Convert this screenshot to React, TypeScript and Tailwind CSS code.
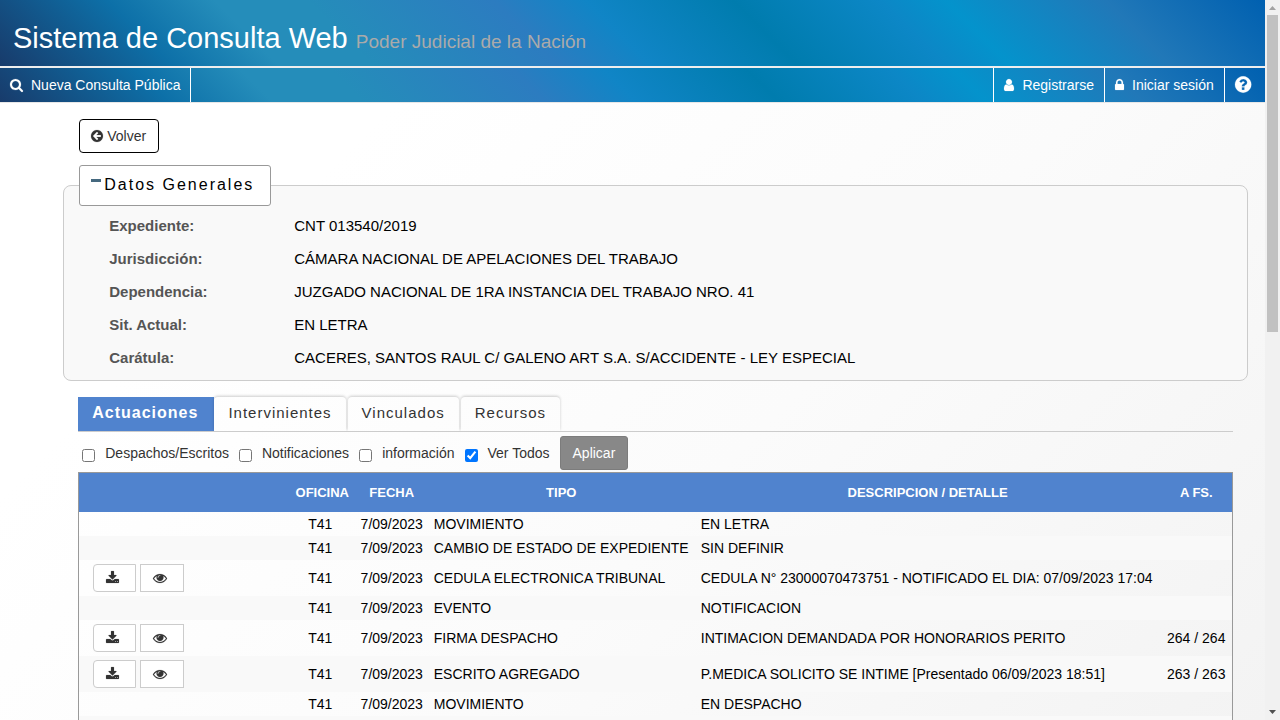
import React from "react";

type IconName =
  | "search"
  | "user"
  | "lock"
  | "question"
  | "back"
  | "download"
  | "eye";

const ICONS: Record<IconName, { left: number; width: number; d: string }> = {
  search: {
    left: 64,
    width: 1664,
    d: "M1216 832q0-185-131.5-316.5t-316.5-131.5-316.5 131.5-131.5 316.5 131.5 316.5 316.5 131.5 316.5-131.5 131.5-316.5zm512 832q0 52-38 90t-90 38q-54 0-90-38l-343-342q-179 124-399 124-143 0-273.5-55.5t-225-150-150-225-55.5-273.5 55.5-273.5 150-225 225-150 273.5-55.5 273.5 55.5 225 150 150 225 55.5 273.5q0 220-124 399l343 343q37 37 37 90z",
  },
  user: {
    left: 256,
    width: 1280,
    d: "M1536 1399q0 109-62.5 187t-150.5 78h-854q-88 0-150.5-78t-62.5-187q0-85 8.5-160.5t31.5-152 58.5-131 94-89 134.5-34.5q131 128 313 128t313-128q76 0 134.5 34.5t94 89 58.5 131 31.5 152 8.5 160.5zm-256-887q0 159-112.5 271.5t-271.5 112.5-271.5-112.5-112.5-271.5 112.5-271.5 271.5-112.5 271.5 112.5 112.5 271.5z",
  },
  lock: {
    left: 320,
    width: 1152,
    d: "M640 768h512v-192q0-106-75-181t-181-75-181 75-75 181v192zm832 96v576q0 40-28 68t-68 28h-960q-40 0-68-28t-28-68v-576q0-40 28-68t68-28h32v-192q0-184 132-316t316-132 316 132 132 316v192h32q40 0 68 28t28 68z",
  },
  question: {
    left: 128,
    width: 1536,
    d: "M1024 1376v-192q0-14-9-23t-23-9h-192q-14 0-23 9t-9 23v192q0 14 9 23t23 9h192q14 0 23-9t9-23zm256-672q0-88-55.5-163t-138.5-116-170-41q-243 0-371 213-15 24 8 42l132 100q7 6 19 6 16 0 25-12 53-68 86-92 34-24 86-24 48 0 85.5 26t37.5 59q0 38-20 61t-68 45q-63 28-115.5 86.5t-52.5 125.5v36q0 14 9 23t23 9h192q14 0 23-9t9-23q0-19 21.5-49.5t54.5-49.5q32-18 49-28.5t46-35 44.5-48 28-60.5 12.5-81zm384 192q0 209-103 385.5t-279.5 279.5-385.5 103-385.5-103-279.5-279.5-103-385.5 103-385.5 279.5-279.5 385.5-103 385.5 103 279.5 279.5 103 385.5z",
  },
  back: {
    left: 128,
    width: 1536,
    d: "M1408 960v-128q0-26-19-45t-45-19h-502l189-189q19-19 19-45t-19-45l-91-91q-18-18-45-18t-45 18l-362 362-91 91q-18 18-18 45t18 45l91 91 362 362q18 18 45 18t45-18l91-91q18-18 18-45t-18-45l-189-189h502q26 0 45-19t19-45zm256-64q0 209-103 385.5t-279.5 279.5-385.5 103-385.5-103-279.5-279.5-103-385.5 103-385.5 279.5-279.5 385.5-103 385.5 103 279.5 279.5 103 385.5z",
  },
  download: {
    left: 64,
    width: 1664,
    d: "M1344 1344q0-26-19-45t-45-19-45 19-19 45 19 45 45 19 45-19 19-45zm256 0q0-26-19-45t-45-19-45 19-19 45 19 45 45 19 45-19 19-45zm128-224v320q0 40-28 68t-68 28h-1472q-40 0-68-28t-28-68v-320q0-40 28-68t68-28h465l135 136q58 56 136 56t136-56l136-136h464q40 0 68 28t28 68zm-325-569q17 41-14 70l-448 448q-18 19-45 19t-45-19l-448-448q-31-29-14-70 17-39 59-39h256v-448q0-26 19-45t45-19h256q26 0 45 19t19 45v448h256q42 0 59 39z",
  },
  eye: {
    left: 0,
    width: 1792,
    d: "M1664 960q-152-236-381-353 61 104 61 225 0 185-131.5 316.5t-316.5 131.5-316.5-131.5-131.5-316.5q0-121 61-225-229 117-381 353 133 205 333.5 326.5t434.5 121.5 434.5-121.5 333.5-326.5zm-720-384q0-20-14-34t-34-14q-125 0-214.5 89.5t-89.5 214.5q0 20 14 34t34 14 34-14 14-34q0-86 61-147t147-61q20 0 34-14t14-34zm848 384q0 34-20 69-140 230-376.5 368.5t-499.5 138.5-499.5-139-376.5-368q-20-35-20-69t20-69q140-229 376.5-368t499.5-139 499.5 139 376.5 368q20 35 20 69z",
  },
};

function Icon({ name, className = "h-3.5" }: { name: IconName; className?: string }) {
  const icon = ICONS[name];
  return (
    <svg
      viewBox={`${icon.left} 0 ${icon.width} 1792`}
      className={`${className} w-auto shrink-0 overflow-visible fill-current stroke-current`}
      strokeWidth="20"
      aria-hidden="true"
    >
      <path d={icon.d} />
    </svg>
  );
}

const BAND =
  "bg-[linear-gradient(45deg,#183b6b_0%,#0d70a8_13%,#258dba_21%,#258dba_28%,#2c7cc0_42%,#1085c6_49%,#007cae_60%,#0c87c6_71%,#0493cc_76%,#2178b8_88%,#0060b0_100%)]";

const DATOS = [
  ["Expediente:", "CNT 013540/2019"],
  ["Jurisdicción:", "CÁMARA NACIONAL DE APELACIONES DEL TRABAJO"],
  ["Dependencia:", "JUZGADO NACIONAL DE 1RA INSTANCIA DEL TRABAJO NRO. 41"],
  ["Sit. Actual:", "EN LETRA"],
  ["Carátula:", "CACERES, SANTOS RAUL C/ GALENO ART S.A. S/ACCIDENTE - LEY ESPECIAL"],
];

interface Actuacion {
  tipo: string;
  detalle: string;
  fojas?: string;
  archivo?: boolean;
}

const ACTUACIONES: Actuacion[] = [
  { tipo: "MOVIMIENTO", detalle: "EN LETRA" },
  { tipo: "CAMBIO DE ESTADO DE EXPEDIENTE", detalle: "SIN DEFINIR" },
  {
    tipo: "CEDULA ELECTRONICA TRIBUNAL",
    detalle: "CEDULA N° 23000070473751 - NOTIFICADO EL DIA: 07/09/2023 17:04",
    archivo: true,
  },
  { tipo: "EVENTO", detalle: "NOTIFICACION" },
  {
    tipo: "FIRMA DESPACHO",
    detalle: "INTIMACION DEMANDADA POR HONORARIOS PERITO",
    fojas: "264 / 264",
    archivo: true,
  },
  {
    tipo: "ESCRITO AGREGADO",
    detalle: "P.MEDICA SOLICITO SE INTIME [Presentado 06/09/2023 18:51]",
    fojas: "263 / 263",
    archivo: true,
  },
  { tipo: "MOVIMIENTO", detalle: "EN DESPACHO" },
];

function NavBar() {
  return (
    <nav className={`flex h-[35px] border-b border-[#e7e7e7] text-sm text-white ${BAND}`}>
      <a href="#consulta" className="flex items-center gap-2 border-r border-white px-2.5">
        <Icon name="search" />
        Nueva Consulta Pública
      </a>
      <div className="ml-auto flex">
        <a href="#registro" className="flex items-center gap-2 border-l border-white px-2.5">
          <Icon name="user" />
          Registrarse
        </a>
        <a href="#sesion" className="flex items-center gap-2 border-l border-white px-2.5">
          <Icon name="lock" />
          Iniciar sesión
        </a>
        <a
          href="#ayuda"
          aria-label="Ayuda"
          className="flex items-center border-l border-white pr-3.5 pb-0.5 pl-2.5"
        >
          <Icon name="question" className="h-[19px]" />
        </a>
      </div>
    </nav>
  );
}

function DatosGenerales() {
  return (
    <fieldset className="mt-3 rounded-lg border border-[#ccc] bg-[#f9f9f9] pt-[3px] pb-1.5">
      <legend className="ml-[15px] flex h-[41px] w-48 items-center gap-[3px] rounded-[3px] border border-[#999] bg-white pb-0.5 pl-[11px] text-base tracking-[2px]">
        <span className="mb-2 h-[3px] w-2.5 bg-[#45697f]" />
        Datos Generales
      </legend>
      <dl className="grid grid-cols-[185px_1fr] pl-[45px] text-[15px] leading-[33px]">
        {DATOS.map(([campo, valor]) => (
          <React.Fragment key={campo}>
            <dt className="font-bold text-[#555]">{campo}</dt>
            <dd>{valor}</dd>
          </React.Fragment>
        ))}
      </dl>
    </fieldset>
  );
}

function Tabs() {
  return (
    <div role="tablist" className="mt-4 flex h-[35px] gap-0.5 border-b border-[#ccc]">
      <button
        role="tab"
        aria-selected="true"
        className="-mr-0.5 bg-[#5083ce] pr-4 pb-0.5 pl-3.5 text-base font-bold tracking-[1px] text-white"
      >
        Actuaciones
      </button>
      {["Intervinientes", "Vinculados", "Recursos"].map((t) => (
        <button
          key={t}
          role="tab"
          aria-selected="false"
          className="rounded-t-sm px-3.5 pb-px text-[15px] tracking-[1px] text-[#333] shadow-[0_-1px_3px_rgba(0,0,0,0.2)] [clip-path:inset(-4px_-3px_0_-3px)]"
        >
          {t}
        </button>
      ))}
    </div>
  );
}

function Filtros() {
  return (
    <form className="flex h-10 items-center gap-2.5 pt-1 pb-0.5 pl-1 text-sm text-[#333]">
      {["Despachos/Escritos", "Notificaciones", "información", "Ver Todos"].map((f) => (
        <label key={f} className="flex items-center gap-2.5">
          <input type="checkbox" defaultChecked={f === "Ver Todos"} className="mt-1 size-[13px]" />
          {f}
        </label>
      ))}
      <button
        type="button"
        className="h-[34px] rounded-[3px] border border-[#7c7c7c] bg-[#888] px-3 text-white"
      >
        Aplicar
      </button>
    </form>
  );
}

function TablaActuaciones() {
  return (
    <table className="w-full table-fixed border border-[#999] text-sm">
      <colgroup>
        <col className="w-[206px]" />
        <col className="w-[71px]" />
        <col className="w-[72px]" />
        <col className="w-[267px]" />
        <col />
        <col className="w-[72px]" />
      </colgroup>
      <thead>
        <tr className="h-[39px] bg-[#5083ce] text-[13px] text-white *:pt-0.5">
          <th aria-label="Acciones" />
          <th className="pl-1">OFICINA</th>
          <th>FECHA</th>
          <th>TIPO</th>
          <th>DESCRIPCION / DETALLE</th>
          <th>A FS.</th>
        </tr>
      </thead>
      <tbody>
        {ACTUACIONES.map((a, i) => (
          <tr key={i} className="h-6 even:bg-[#f9f9f9]">
            <td className="pl-3.5">
              {a.archivo && (
                <div className="flex gap-1 py-1 text-[#333]">
                  <button
                    aria-label="Descargar"
                    className="flex h-7 items-center rounded-l border border-[#ccc] bg-white pr-4 pl-3"
                  >
                    <Icon name="download" />
                  </button>
                  <button
                    aria-label="Ver"
                    className="flex h-7 items-center border border-[#ccc] bg-white pr-4 pl-3"
                  >
                    <Icon name="eye" />
                  </button>
                </div>
              )}
            </td>
            <td className="text-center">T41</td>
            <td className="text-center">7/09/2023</td>
            <td className="pl-1.5">{a.tipo}</td>
            <td className="pl-1.5">{a.detalle}</td>
            <td className="text-center">{a.fojas}</td>
          </tr>
        ))}
        <tr className="h-6 bg-[#f9f9f9]">
          <td colSpan={6} />
        </tr>
      </tbody>
    </table>
  );
}

function ScrollBar() {
  return (
    <div className="flex w-[15px] shrink-0 flex-col items-center bg-[#f1f1f1]" aria-hidden="true">
      <svg viewBox="0 0 15 15" className="size-[15px] shrink-0 fill-[#a3a3a3]">
        <path d="M4 10h7L7.5 6z" />
      </svg>
      <div className="flex w-full grow justify-center">
        <div className="h-[46%] w-[11px] bg-[#c1c1c1]" />
      </div>
      <svg viewBox="0 0 15 15" className="size-[15px] shrink-0 fill-[#505050]">
        <path d="M4 5h7L7.5 9z" />
      </svg>
    </div>
  );
}

export default function App() {
  return (
    <div className="flex h-screen overflow-hidden bg-white font-['Liberation_Sans',Arial,sans-serif] text-black">
      <div className="min-w-0 flex-1 overflow-hidden bg-[linear-gradient(135deg,#ffffff_25%,#fbfbfb_60%,#f3f3f3_100%)]">
        <header className={`flex h-[68px] items-center border-b-2 border-[#eee] pt-3 pl-[13px] ${BAND}`}>
          <h1 className="text-[29px] text-white">
            Sistema de Consulta Web <small className="text-[19px] text-[#aaa]">Poder Judicial de la Nación</small>
          </h1>
        </header>
        <NavBar />
        <main className="mr-[17px] ml-[5%] pt-4">
          <button className="ml-4 flex h-[34px] items-center gap-1 rounded border border-black bg-white pr-3 pl-[11px] text-sm text-[#333]">
            <Icon name="back" />
            Volver
          </button>
          <DatosGenerales />
          <div className="px-[15px]">
            <Tabs />
            <Filtros />
            <TablaActuaciones />
          </div>
        </main>
      </div>
      <ScrollBar />
    </div>
  );
}
